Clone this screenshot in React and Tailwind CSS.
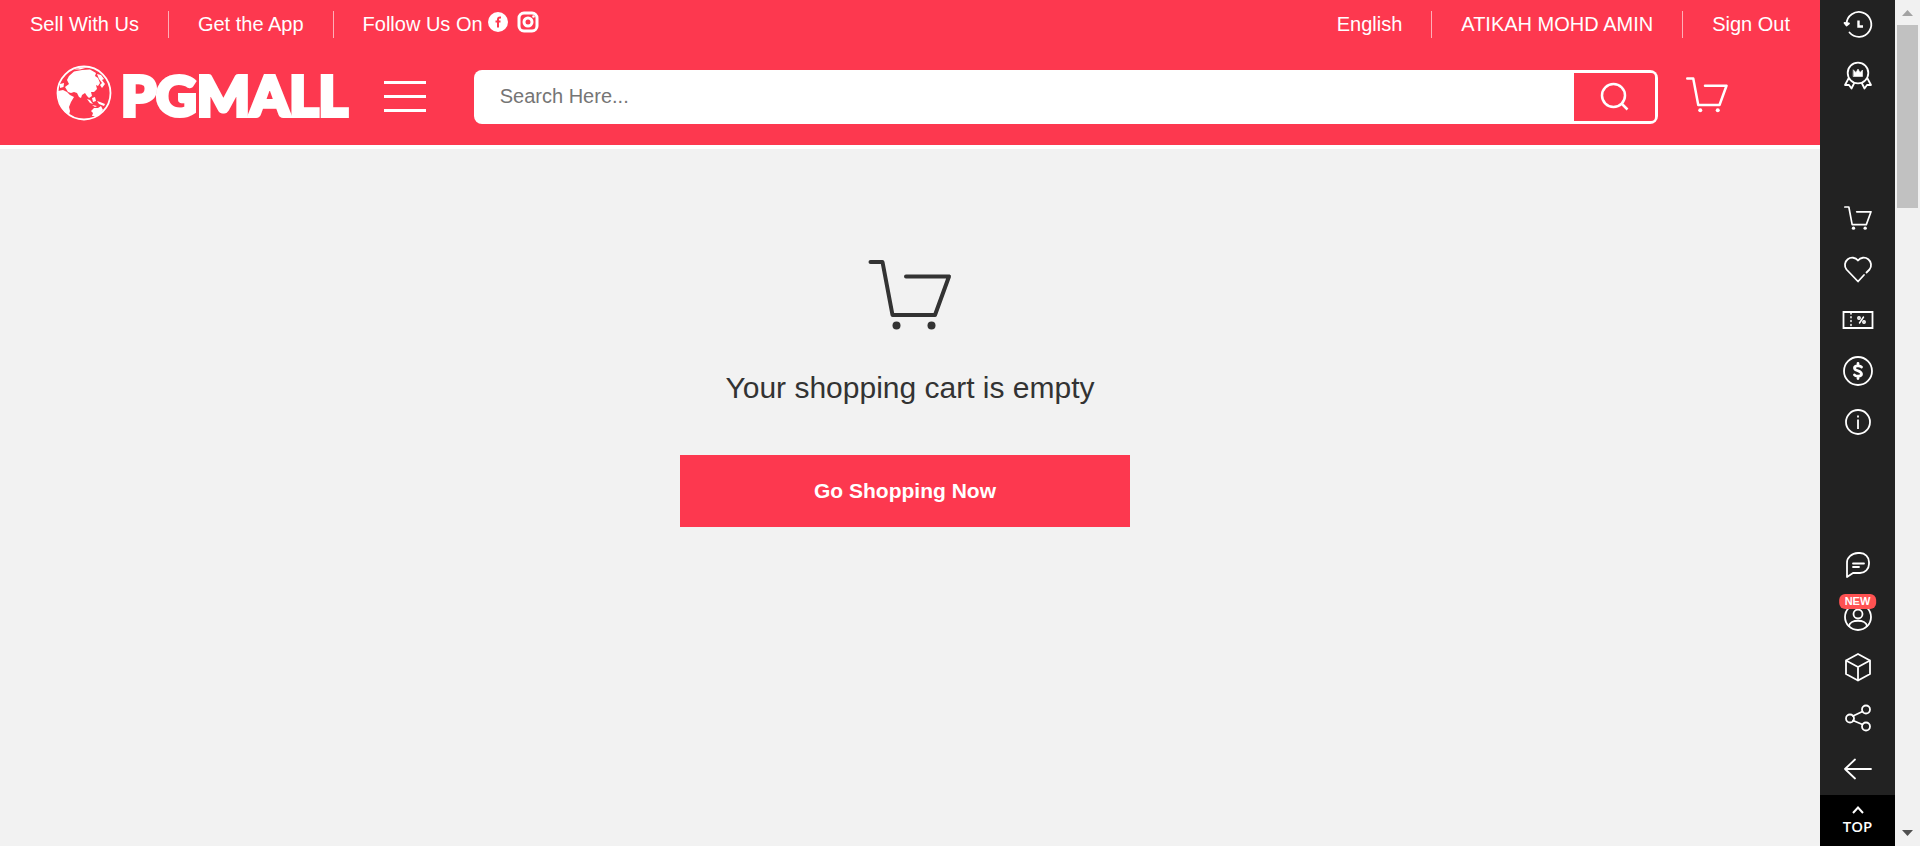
const BAR_LINK = "text-xl leading-6 text-white hover:underline";

function Divider() {
  return <span aria-hidden="true" className="h-[27px] w-px bg-white/60" />;
}

function CartIcon({ className, strokeWidth = 4, dot = 4 }) {
  return (
    <svg viewBox="0 0 84 71" className={className} fill="none" stroke="currentColor" strokeWidth={strokeWidth} strokeLinecap="round" strokeLinejoin="round" aria-hidden="true">
      <path d="M2.500 3H14.500L24.500 56H67L81 17.500H38" />
      <circle cx="28.500" cy="66.500" r={dot} fill="currentColor" stroke="none" />
      <circle cx="63.500" cy="66.500" r={dot} fill="currentColor" stroke="none" />
    </svg>
  );
}

function Globe() {
  return (
    <svg viewBox="0 0 56 56" className="size-14 shrink-0 text-white" aria-hidden="true">
      <circle cx="28" cy="28" r="26.500" fill="none" stroke="currentColor" strokeWidth="1.800" />
      <g fill="currentColor">
        <path d="M13 11L18 6.500L26 5L34 4.500L40 8L39 11L42 13L44 18L42 21L40 20L41 24L38 27L35 27L36 31L33 33L31 31L29 28L26 30L25 33L23 32L21 28L18 27L15 28L12 27L9 22L13 19L11 15Z" />
        <path d="M18 4.500L26 2.500L31 2.500L24 4.500Z" />
        <path d="M4 19L8 18L7.500 22L4 23Z" />
        <path d="M2 26L7 25L11 27L14 30L18 32L15 37L13 42L14 46L13 50C6 46 1.500 38 2 26Z" />
        <path d="M41 9L45 10L48 14L46 15L49 19L46 23L44 20L46 18L43 14Z" />
        <path d="M31 34L34 35L37 39L34 38ZM36 33L39 32L40 36L37 37ZM41 36L44 37L49 39L48 41L43 39ZM36 40L41 41L39 42Z" />
        <path d="M35 46L38 43L42 43L45 41L47 45L44 49L41 51L36 51L37 48Z" />
      </g>
    </svg>
  );
}

function Icon({ children, className = "size-8" }) {
  return (
    <svg viewBox="0 0 32 32" className={className} fill="none" stroke="currentColor" strokeWidth="1.800" strokeLinecap="round" strokeLinejoin="round" aria-hidden="true">
      {children}
    </svg>
  );
}

const icons = {
  history: (
    <Icon>
      <path d="M4.500 15A12.400 12.400 0 1 1 7.500 23.500" />
      <path d="M2.500 14L4.500 16.500L7 14.500Z" fill="currentColor" />
      <path d="M16.500 11.500V17.500H21" strokeWidth="2.400" strokeLinecap="butt" strokeLinejoin="miter" />
    </Icon>
  ),
  rewards: (
    <Icon>
      <circle cx="16" cy="13" r="10.300" />
      <path d="M6.500 18.500L3 25L7 25L9.500 28.500L12 23.500M25.500 18.500L29 25L25 25L22.500 28.500L20 23.500" />
      <path d="M11.500 10L14 12.500L16 9L18 12.500L20.500 10V16.500H11.500Z" fill="currentColor" strokeWidth="0.600" />
    </Icon>
  ),
  cart: <CartIcon className="w-7" strokeWidth={5} dot={5} />,
  wishlist: (
    <Icon>
      <path d="M24.500 19.500L27.500 16.500A7 7 0 0 0 16 7.500A7 7 0 0 0 4.500 16.500L16 28.500L22 22" />
    </Icon>
  ),
  vouchers: (
    <Icon>
      <path d="M1.500 8H30.500V24H1.500Z" strokeLinejoin="miter" />
      <path d="M9 9V23" strokeDasharray="1 2.800" strokeWidth="1.500" />
      <path d="M17.500 19L21.500 13" strokeWidth="1.500" />
      <circle cx="17" cy="14" r="1.200" strokeWidth="1.500" />
      <circle cx="22" cy="18" r="1.200" strokeWidth="1.500" />
    </Icon>
  ),
  coins: (
    <Icon>
      <circle cx="16" cy="16" r="14" />
      <path d="M19.500 12C18.500 10.500 12.500 10 12.500 13C12.500 16.500 19.500 15 19.500 19C19.500 22 13.500 21.500 12.500 20M16 8.500V10.500M16 21.500V23.500" strokeWidth="2.800" />
    </Icon>
  ),
  info: (
    <Icon>
      <circle cx="16" cy="16" r="12" />
      <path d="M16 13.500V23" strokeLinecap="butt" />
      <path d="M16 9.500V11.500" strokeLinecap="butt" />
    </Icon>
  ),
  chat: (
    <Icon>
      <path d="M5 28V14A11.500 9.500 0 0 1 16 4H18A9 9 0 0 1 27 13V15A9 9 0 0 1 18 24H11Z" />
      <path d="M11 14.500H22M11 18H17" />
    </Icon>
  ),
  account: (
    <Icon>
      <circle cx="16" cy="17" r="13" />
      <circle cx="16" cy="14" r="4.500" />
      <path d="M7 26C8 19 24 19 25 26" />
    </Icon>
  ),
  orders: (
    <Icon>
      <path d="M16 3L28 9.500V23L16 29.500L4 23V9.500ZM4 9.500L16 16L28 9.500M16 16V29.500" />
    </Icon>
  ),
  share: (
    <Icon>
      <circle cx="8" cy="16.500" r="4" />
      <circle cx="24" cy="7.500" r="4" />
      <circle cx="24" cy="24.500" r="4" />
      <path d="M11 14L20.500 9.500M11 18.500L20.500 22.500" />
    </Icon>
  ),
  back: (
    <Icon>
      <path d="M29 16H3M13 6.500L3 16L13 25.500" />
    </Icon>
  ),
};

function RailGroup({ items }) {
  return (
    <ul className="flex flex-col">
      {items.map(([key, label]) => (
        <li key={key}>
          <button type="button" aria-label={label} className="relative flex h-[51px] w-full items-center justify-center pb-0.5 text-white">
            {icons[key]}
            {key === "account" && (
              <span className="absolute top-[3px] left-1/2 -translate-x-1/2 rounded-md bg-[#ff5252] px-1.5 text-[11px] leading-[15px] font-bold">NEW</span>
            )}
          </button>
        </li>
      ))}
    </ul>
  );
}

function Header() {
  return (
    <header className="border-b-4 border-white bg-[#fd384f] pb-[21px]">
      <nav aria-label="Utility" className="flex h-12 items-center justify-between px-[30px]">
        <div className="flex items-center gap-[29px]">
          <a href="#sell" className={BAR_LINK}>Sell With Us</a>
          <Divider />
          <a href="#app" className={BAR_LINK}>Get the App</a>
          <Divider />
          <div className="flex items-center gap-2 text-white">
            <span className="text-xl leading-6">Follow Us On</span>
            <a href="#facebook" aria-label="Facebook" className="-ml-1 pb-1">
              <svg viewBox="0 0 22 22" className="size-[22px]" aria-hidden="true">
                <circle cx="11" cy="11" r="10" fill="currentColor" />
                <path d="M14 6.500H13Q11 6.500 11 8.500V16.500M8.500 10.500H13.500" fill="none" stroke="#fd384f" strokeWidth="2" />
              </svg>
            </a>
            <a href="#instagram" aria-label="Instagram" className="pb-1">
              <svg viewBox="0 0 22 22" className="size-[22px]" fill="none" stroke="currentColor" aria-hidden="true">
                <rect x="2" y="2" width="18" height="18" rx="5" strokeWidth="3" />
                <circle cx="11" cy="11" r="4" strokeWidth="3" />
                <circle cx="16.500" cy="5.500" r="1.300" fill="currentColor" stroke="none" />
              </svg>
            </a>
          </div>
        </div>
        <div className="flex items-center gap-[29px]">
          <button type="button" className={BAR_LINK}>English</button>
          <Divider />
          <a href="#account" className={BAR_LINK}>ATIKAH MOHD AMIN</a>
          <Divider />
          <a href="#signout" className={BAR_LINK}>Sign Out</a>
        </div>
      </nav>
      <div className="mt-[22px] flex h-[54px] items-center pr-[92px] pl-14">
        <a href="#home" aria-label="PGMALL" className="flex items-center gap-[9px] pb-2 text-white">
          <Globe />
          <span className="pt-1 font-[Lato,sans-serif] text-[56px] leading-[54px] font-black [-webkit-text-stroke:4px_white]">PGMALL</span>
        </a>
        <button type="button" aria-label="Categories" className="ml-9 flex w-[42px] shrink-0 flex-col gap-[11px] pb-0.5">
          <span className="h-[3px] w-full bg-white" />
          <span className="h-[3px] w-full bg-white" />
          <span className="h-[3px] w-full bg-white" />
        </button>
        <form role="search" className="ml-12 flex h-[54px] min-w-0 flex-1 rounded-lg bg-white p-[3px]" onSubmit={(e) => e.preventDefault()}>
          <input type="text" aria-label="Search" placeholder="Search Here..." className="min-w-0 flex-1 bg-transparent px-[23px] pb-0.5 text-xl text-[#333] outline-none placeholder:text-[#757575]" />
          <button type="submit" aria-label="Search" className="flex w-[81px] items-center justify-center rounded-r bg-[#fd384f] text-white">
            <svg viewBox="0 0 30 30" className="size-[30px]" fill="none" stroke="currentColor" strokeWidth="2.500" aria-hidden="true">
              <circle cx="13.500" cy="13.500" r="11.500" />
              <path d="M21 21L27.500 27.500" />
            </svg>
          </button>
        </form>
        <a href="#cart" aria-label="Cart" className="ml-7 shrink-0 pb-1 text-white">
          <CartIcon className="w-[42px]" strokeWidth={5} />
        </a>
      </div>
    </header>
  );
}

export default function App() {
  return (
    <div className="flex min-h-screen bg-[#f2f2f2] font-['Liberation_Sans',Arial,sans-serif]">
      <div className="flex min-w-0 flex-1 flex-col">
        <Header />
        <main className="flex flex-col items-center pt-[110px] text-[#333]">
          <CartIcon className="w-[84px]" />
          <h1 className="mt-10 text-[30px] leading-9">Your shopping cart is empty</h1>
          <a href="#shop" className="mt-[49px] mr-[10px] flex h-[72px] w-[450px] items-center justify-center bg-[#fd384f] text-[21px] font-bold text-white">Go Shopping Now</a>
        </main>
      </div>
      <aside aria-label="Shortcuts" className="flex w-[75px] shrink-0 flex-col justify-between bg-[#222]">
        <RailGroup items={[["history", "History"], ["rewards", "Rewards"]]} />
        <RailGroup items={[["cart", "Cart"], ["wishlist", "Wishlist"], ["vouchers", "Vouchers"], ["coins", "Coins"], ["info", "Information"]]} />
        <div>
          <RailGroup items={[["chat", "Chat"], ["account", "Account"], ["orders", "Orders"], ["share", "Share"], ["back", "Back"]]} />
          <a href="#top" className="flex h-[51px] flex-col items-center justify-center bg-black text-white">
            <svg viewBox="0 0 12 8" className="w-3" fill="none" stroke="currentColor" strokeWidth="2" aria-hidden="true">
              <path d="M1 7L6 1.500L11 7" />
            </svg>
            <span className="mt-0.5 font-['Open_Sans',sans-serif] text-[15px] leading-5 font-semibold">TOP</span>
          </a>
        </div>
      </aside>
      <div aria-hidden="true" className="flex w-[25px] shrink-0 flex-col items-center bg-[#f1f1f1]">
        <svg viewBox="0 0 25 25" className="h-[25px] w-full"><path d="M7 16L12.500 10L18 16Z" fill="#a3a3a3" /></svg>
        <div className="h-[183px] w-[21px] bg-[#c1c1c1]" />
        <svg viewBox="0 0 25 25" className="mt-auto h-[25px] w-full"><path d="M7 9L12.500 15L18 9Z" fill="#505050" /></svg>
      </div>
    </div>
  );
}
